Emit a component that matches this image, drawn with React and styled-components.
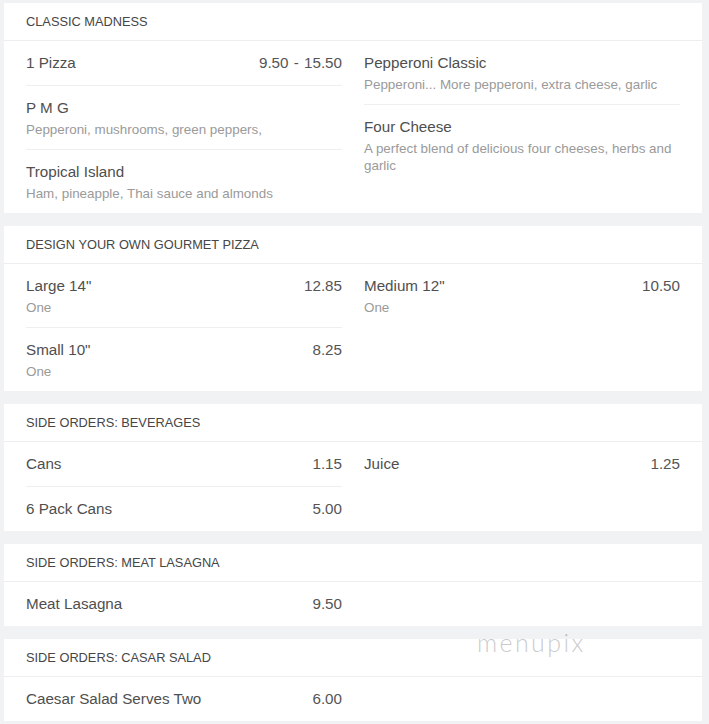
import React from 'react';
import styled, { createGlobalStyle } from 'styled-components';

const GlobalStyle = createGlobalStyle`
  html, body {
    margin: 0;
    padding: 0;
    background: #f1f2f4;
  }
  body {
    font-family: 'Liberation Sans', Arial, sans-serif;
  }
`;

const Page = styled.div`
  position: relative;
  padding: 3px 7px 4px 4px;
  display: flex;
  flex-direction: column;
  gap: 13px;
`;

const Card = styled.section`
  background: #fff;
`;

const CardHeader = styled.h2`
  margin: 0;
  height: 37px;
  padding: 0 22px;
  display: flex;
  align-items: center;
  border-bottom: 1px solid #eceef0;
  font-size: 12.8px;
  font-weight: 400;
  color: #464646;
  text-transform: uppercase;
`;

const CardBody = styled.div`
  display: grid;
  grid-template-columns: 316px 316px;
  column-gap: 22px;
  padding: 0 22px;
`;

const Column = styled.div`
  display: flex;
  flex-direction: column;
`;

const Item = styled.div`
  padding: 11px 0;
  border-bottom: 1px solid #eeeff1;

  &:last-child {
    border-bottom: none;
  }
`;

const ItemTop = styled.div`
  display: flex;
  justify-content: space-between;
  align-items: baseline;
  line-height: 22px;
  font-size: 15.2px;
  color: #4f4f4f;
`;

const Price = styled.span`
  color: #555;
  word-spacing: 1px;
`;

const Desc = styled.p`
  margin: 2px 0 0;
  font-size: 13.4px;
  line-height: 17px;
  color: #9a9a9a;
`;

const Watermark = styled.div`
  position: absolute;
  left: 477px;
  top: 627px;
  font-family: Lato, 'DejaVu Sans', sans-serif;
  font-weight: 300;
  font-size: 25px;
  letter-spacing: 2.4px;
  color: rgba(150, 150, 150, 0.5);
  pointer-events: none;
`;

const menu = [
  {
    title: 'Classic Madness',
    columns: [
      [
        { name: '1 Pizza', price: '9.50 - 15.50' },
        { name: 'P M G', desc: 'Pepperoni, mushrooms, green peppers,' },
        { name: 'Tropical Island', desc: 'Ham, pineapple, Thai sauce and almonds' },
      ],
      [
        { name: 'Pepperoni Classic', desc: 'Pepperoni... More pepperoni, extra cheese, garlic' },
        { name: 'Four Cheese', desc: 'A perfect blend of delicious four cheeses, herbs and garlic' },
      ],
    ],
  },
  {
    title: 'Design Your Own Gourmet Pizza',
    columns: [
      [
        { name: 'Large 14"', price: '12.85', desc: 'One' },
        { name: 'Small 10"', price: '8.25', desc: 'One' },
      ],
      [{ name: 'Medium 12"', price: '10.50', desc: 'One' }],
    ],
  },
  {
    title: 'Side Orders: Beverages',
    columns: [
      [
        { name: 'Cans', price: '1.15' },
        { name: '6 Pack Cans', price: '5.00' },
      ],
      [{ name: 'Juice', price: '1.25' }],
    ],
  },
  {
    title: 'Side Orders: Meat Lasagna',
    columns: [[{ name: 'Meat Lasagna', price: '9.50' }], []],
  },
  {
    title: 'Side Orders: Casar Salad',
    columns: [[{ name: 'Caesar Salad Serves Two', price: '6.00' }], []],
  },
];

const MenuItem = ({ name, price, desc }) => (
  <Item>
    <ItemTop>
      <span>{name}</span>
      {price && <Price>{price}</Price>}
    </ItemTop>
    {desc && <Desc>{desc}</Desc>}
  </Item>
);

const App = () => (
  <>
    <GlobalStyle />
    <Page>
      {menu.map((section) => (
        <Card key={section.title}>
          <CardHeader>{section.title}</CardHeader>
          <CardBody>
            {section.columns.map((col, i) => (
              <Column key={i}>
                {col.map((item) => (
                  <MenuItem key={item.name} {...item} />
                ))}
              </Column>
            ))}
          </CardBody>
        </Card>
      ))}
      <Watermark>menupix</Watermark>
    </Page>
  </>
);

export default App;
